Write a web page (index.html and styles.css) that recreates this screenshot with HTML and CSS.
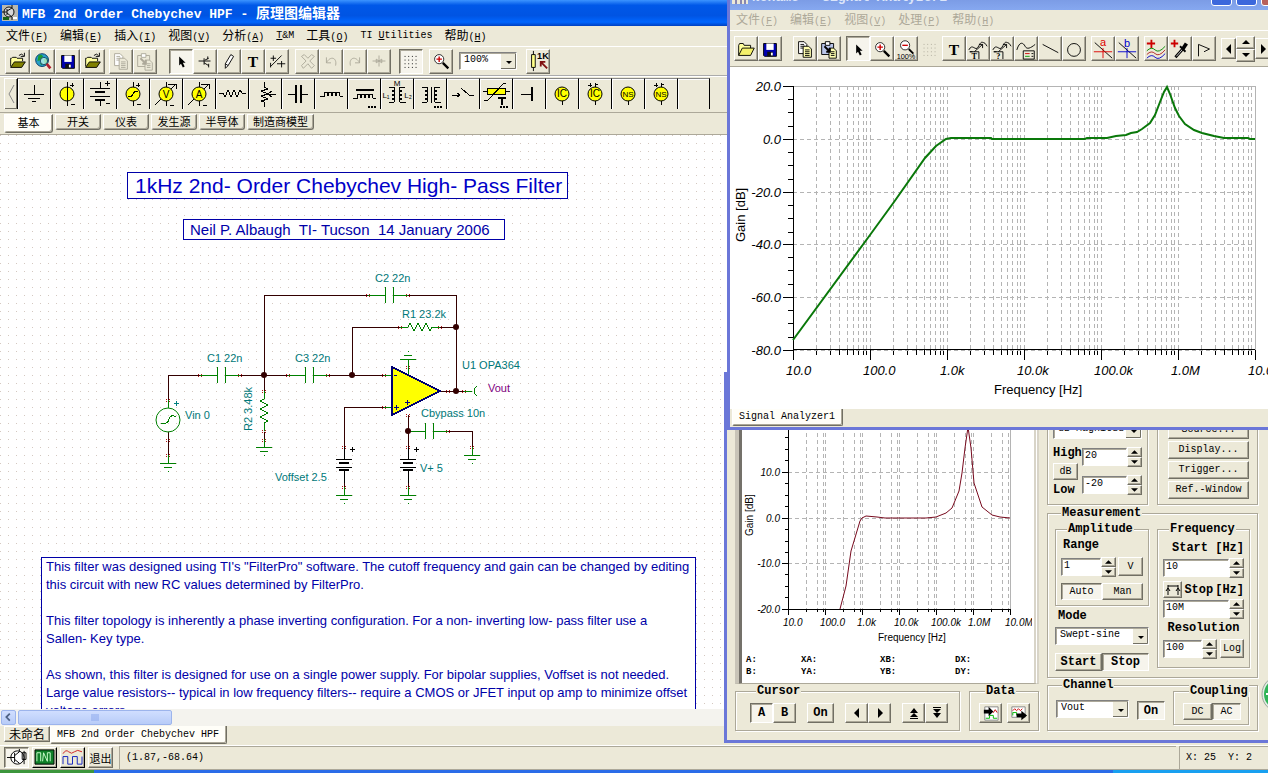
FILE: index.html
```html
<!DOCTYPE html>
<html lang="zh-CN">
<head>
    <meta charset="UTF-8">
    <meta name="viewport" content="width=device-width, initial-scale=1.0">
    <title>MFB 2nd Order Chebychev HPF - 原理图编辑器</title>
    <link rel="stylesheet" href="styles.css">
</head>
<body>
<!-- Shared icons -->
<svg class="sprite" aria-hidden="true">
    <symbol id="i-open" viewBox="0 0 24 24"><path d="M4 18V9h1l1-1h4l1 1h6v3" fill="#ffff9c" stroke="#000"/><path d="M4 19l4-6h12l-4 6z" fill="#808000" stroke="#000"/><path d="M13 6q3-3 5 0m1-3v4h-4" fill="none" stroke="#000"/></symbol>
    <symbol id="i-folder" viewBox="0 0 24 24"><path d="M4 19V8l1-2h4l1 2h7v3" fill="#ffff9c" stroke="#000"/><path d="M4 19l4-8h13l-4 8z" fill="#f4f06a" stroke="#000"/></symbol>
    <symbol id="i-save" viewBox="0 0 24 24"><path d="M5 6h14v14H6l-1-1z" fill="#0000b0" stroke="#000"/><path d="M8 6h8v7H8z" fill="#fff"/><path d="M9 15h6v5H9z" fill="#111"/><path d="M13 16h2v3h-2z" fill="#fff"/></symbol>
    <symbol id="i-copy" viewBox="0 0 24 24"><path d="M5 4h6l3 3v10H5z" fill="#fff" stroke="currentColor"/><path d="M7 7h4M7 9h5M7 11h5" stroke="currentColor"/><path d="M10 9h6l3 3v9h-9z" fill="var(--sheet)" stroke="currentColor"/><path d="M12 13h5M12 15h5M12 17h5M12 19h5" stroke="currentColor"/></symbol>
    <symbol id="i-paste" viewBox="0 0 24 24"><path d="M4 6h13v12H4z" fill="var(--clip)" stroke="currentColor"/><path d="M8 4h5v4H8z" fill="#fff" stroke="currentColor"/><path d="M12 11h5l3 3v8h-8z" fill="var(--sheet)" stroke="currentColor"/><path d="M14 15h4M14 17h4M14 19h4" stroke="currentColor"/><path d="M7 9l6 6m0-4v4H9" fill="none" stroke="currentColor" stroke-width="2"/></symbol>
    <symbol id="i-arrow" viewBox="0 0 24 24"><path d="M10 7v10l2-2 2 4 2-1-2-4h3z" fill="#000"/></symbol>
    <symbol id="i-zoom" viewBox="0 0 24 24"><circle cx="10" cy="10" r="5" fill="#fff" stroke="#222"/><path d="M14 14l6 6" stroke="#000" stroke-width="2.5"/><path d="M7 10h6M10 7v6" stroke="#c00" stroke-width="1.5"/></symbol>
    <symbol id="i-text" viewBox="0 0 24 24"><text x="12" y="18" text-anchor="middle" class="t-icon">T</text></symbol>
    <symbol id="i-grid" viewBox="0 0 24 24"><path d="M5 7h15M5 11h15M5 15h15M5 19h15" stroke="currentColor" stroke-dasharray="1 3"/></symbol>
    <symbol id="i-probe" viewBox="0 0 24 24"><path d="M2 13c4-8 7 2 10-3s3-6 6-5 2 2 4 4M8 15l9-8m0 4V7h-4" fill="none" stroke="#000"/><path d="M3 15h10v8M3 15h3" fill="none" stroke="#000"/></symbol>
    <symbol id="i-left" viewBox="0 0 12 12"><path d="M8 1v10L3 6z"/></symbol>
    <symbol id="i-right" viewBox="0 0 12 12"><path d="M4 1v10l5-5z"/></symbol>
    <symbol id="i-up" viewBox="0 0 8 4"><path d="M0 4h8L4 0z"/></symbol>
    <symbol id="i-down" viewBox="0 0 8 4"><path d="M0 0h8L4 4z"/></symbol>
</svg>

<main class="desktop">
    <!-- Schematic editor -->
    <section class="editor">
        <header class="titlebar">
            <svg width="16" height="16" viewBox="0 0 16 16"><path d="M0 0h16v16H0z" fill="#b9b9b0"/><circle cx="7" cy="7" r="5" fill="#d8d8d8" stroke="#111"/><path d="M5 4v6M5 6l5-3M5 8l5 4v3M0 7h5M10 0v3" fill="none" stroke="#111"/><path d="M1 12h6v3H1z" fill="#186018"/><path d="M11 13h4" stroke="#fff" stroke-width="2"/></svg>
            <h1>MFB 2nd Order Chebychev HPF - <span class="zh">原理图编辑器</span></h1>
        </header>
        <nav class="menubar">
            <a href="#"><span class="zh">文件</span>(<u>F</u>)</a>
            <a href="#"><span class="zh">编辑</span>(<u>E</u>)</a>
            <a href="#"><span class="zh">插入</span>(<u>I</u>)</a>
            <a href="#"><span class="zh">视图</span>(<u>V</u>)</a>
            <a href="#"><span class="zh">分析</span>(<u>A</u>)</a>
            <a href="#"><u>T</u>&amp;M</a>
            <a href="#"><span class="zh">工具</span>(<u>O</u>)</a>
            <a href="#">TI <u>U</u>tilities</a>
            <a href="#"><span class="zh">帮助</span>(<u>H</u>)</a>
        </nav>
        <div class="toolbar">
            <div class="group">
                <button aria-label="Open"><svg><use href="#i-open"/></svg></button>
                <button aria-label="Open from web"><svg viewBox="0 0 24 24"><circle cx="11" cy="11" r="7" fill="#28a0c8" stroke="#036"/><path d="M7 6q4-2 5 1l-2 4-4 1zM13 10l4-1v5l-3 2zM8 14l3 1v2z" fill="#1c9c30"/><circle cx="13" cy="12" r="4" fill="#cfe" fill-opacity=".7" stroke="#146"/><path d="M16 15l4 5" stroke="#b02030" stroke-width="3"/></svg></button>
                <button aria-label="Save"><svg><use href="#i-save"/></svg></button>
                <button aria-label="Close"><svg><use href="#i-open"/></svg></button>
            </div>
            <div class="group dim">
                <button aria-label="Copy"><svg><use href="#i-copy"/></svg></button>
                <button aria-label="Paste"><svg><use href="#i-paste"/></svg></button>
            </div>
            <div class="group">
                <button class="pressed" aria-label="Select"><svg><use href="#i-arrow"/></svg></button>
                <button aria-label="Last component"><svg viewBox="0 0 24 24"><path d="M5 12h7M11 9v7M11 14l5 3M12 11l4-2M15 7v3M16 15v4M12 12h6" fill="none" stroke="#000"/></svg></button>
                <button aria-label="Wire"><svg viewBox="0 0 24 24"><path d="M8 15l6-10 3 2-6 10-3 3zM8 15l3 2" fill="#fff" stroke="#000"/></svg></button>
                <button aria-label="Text"><svg><use href="#i-text"/></svg></button>
                <button aria-label="Hide/Reconnect"><svg viewBox="0 0 24 24"><path d="M5 9h6M8 6v6M5 18L17 6M12 15h9M17 12v7M5 14v5" fill="none" stroke="#000"/></svg></button>
            </div>
            <div class="group dim edit">
                <button aria-label="Delete"><svg viewBox="0 0 24 24"><path d="M6 7l3-2 4 4 4-4 3 2-5 5 5 5-3 3-4-5-5 5-2-3 5-5z" fill="#ece9d8" stroke="currentColor"/></svg></button>
                <button aria-label="Undo"><svg viewBox="0 0 24 24"><path d="M7 8v6h5M7 14c4-8 12-6 10 3" fill="none" stroke="currentColor"/></svg></button>
                <button aria-label="Redo"><svg viewBox="0 0 24 24"><path d="M17 8v6h-5M17 14c-4-8-12-6-10 3" fill="none" stroke="currentColor"/></svg></button>
                <button aria-label="Rotate"><svg viewBox="0 0 24 24"><path d="M5 12h14M12 6v12M9 10l3 2-3 2zM15 10l-3 2 3 2z" fill="none" stroke="currentColor"/></svg></button>
            </div>
            <div class="group"><button class="pressed" aria-label="Grid"><svg><use href="#i-grid"/></svg></button></div>
            <div class="group"><button aria-label="Zoom"><svg><use href="#i-zoom"/></svg></button></div>
            <select class="zoom-select" aria-label="Zoom level"><option>100%</option></select>
            <div class="group"><button aria-label="Find component"><svg viewBox="0 0 24 24"><path d="M7 1v22" stroke="#000"/><path d="M5 5h4v14H5z" fill="#ff8" stroke="#000"/><text x="11" y="10" class="k-icon">1K</text><path d="M22 20l-7-7m0 5v-5h5" fill="none" stroke="#801010" stroke-width="2"/></svg></button></div>
        </div>

        <!-- Component bar -->
        <div class="parts">
            <button class="parts-prev" aria-label="Scroll left"><svg viewBox="0 0 10 24"><path d="M8 3L3 12l5 9" fill="none" stroke="#888"/></svg></button>
            <button aria-label="Ground"><svg viewBox="0 0 32 32"><path d="M16 7v9M6 16h20M10 20h12M14 23h4" stroke="#000"/></svg></button>
            <button aria-label="Voltage source"><svg viewBox="0 0 32 32"><circle cx="16" cy="16" r="7" class="y"/><path d="M16 4v24M19 7h4M21 5v4M20 26h4" class="k"/></svg></button>
            <button aria-label="Battery"><svg viewBox="0 0 32 32"><path d="M16 4v6M6 10h20M6 18h20M16 22v6M21 5h5M23 3v5M22 25h4" class="k"/><path d="M11 14h10M11 22h10" class="k2"/></svg></button>
            <button aria-label="Generator"><svg viewBox="0 0 32 32"><path d="M16 4v24M19 7h4M21 5v4M20 26h4" class="k"/><circle cx="16" cy="16" r="7" class="y"/><path d="M11 18q3 2 5-2t5-2" class="k"/></svg></button>
            <button aria-label="Voltmeter"><svg viewBox="0 0 32 32"><path d="M16 4v24M5 27L26 6m-5 0h5v5M18 6h3M20 27h4" class="k"/><circle cx="16" cy="16" r="7" class="y"/><text x="16" y="20">V</text></svg></button>
            <button aria-label="Ammeter"><svg viewBox="0 0 32 32"><path d="M16 4v24M5 27L26 6m-5 0h5v5M18 6h3M20 27h4" class="k"/><circle cx="16" cy="16" r="7" class="y"/><text x="16" y="20">A</text></svg></button>
            <button aria-label="Resistor"><svg viewBox="0 0 32 32"><path d="M3 15h4l2 4 3-7 3 7 3-7 3 7 3-7 2 3h4" class="k"/></svg></button>
            <button aria-label="Potentiometer"><svg viewBox="0 0 32 32"><path d="M15 4v5l4 2-7 2 7 3-7 2 7 3-7 2 3 1v5M27 16h-8m4-3l-4 3 4 3" class="k"/></svg></button>
            <button aria-label="Capacitor"><svg viewBox="0 0 32 32"><path d="M6 16h7M19 16h7" class="k"/><path d="M14 7v18M19 7v18" class="k2"/></svg></button>
            <button aria-label="Inductor"><svg viewBox="0 0 32 32"><path d="M5 18h4c0-5 4-5 4 0c0-5 4-5 4 0c0-5 4-5 4 0c0-5 4-5 4 0h3" class="k"/></svg></button>
            <button aria-label="Core inductor"><svg viewBox="0 0 32 32"><path d="M8 12h18" class="k2"/><path d="M5 20h4c0-5 4-5 4 0c0-5 4-5 4 0c0-5 4-5 4 0c0-5 4-5 4 0h3" class="k"/><path d="M20 29h8" class="more"/></svg></button>
            <button aria-label="Coupled inductors"><svg viewBox="0 0 32 32"><path d="M8 9h3c4 0 4 4 0 4c4 0 4 4 0 4c4 0 4 4 0 4c4 0 4 4-1 3H8M24 9h-3c-4 0-4 4 0 4c-4 0-4 4 0 4c-4 0-4 4 0 4c-4 0-4 4 1 3h3" class="k"/><text x="16" y="8" class="s">M</text><text x="5" y="20" class="s">L₁</text><text x="27" y="20" class="s">L₂</text></svg></button>
            <button aria-label="Transformer"><svg viewBox="0 0 32 32"><path d="M8 9h3c4 0 4 4 0 4c4 0 4 4 0 4c4 0 4 4 0 4c4 0 4 4-1 3H8M26 9h-3c-4 0-4 4 0 4c-4 0-4 4 0 4c-4 0-4 4 0 4c-4 0-4 4 1 3h3M17 9v16" class="k"/><path d="M20 29h8" class="more"/></svg></button>
            <button aria-label="Switch"><svg viewBox="0 0 32 32"><path d="M5 17h8m-3-2l3 2-3 2M14 10l8 7h5" class="k"/></svg></button>
            <button aria-label="Thermistor"><svg viewBox="0 0 32 32"><path d="M3 13h27" class="k"/><path d="M7 10h18v6H7z" class="y"/><path d="M4 22h4L24 5h2" class="k"/><path d="M18 20h8M22 20v7" class="k2"/><path d="M20 29h8" class="more"/></svg></button>
            <button aria-label="Terminal"><svg viewBox="0 0 32 32"><path d="M8 16h11" class="k"/><path d="M19 9v14" class="k2"/></svg></button>
            <button aria-label="IC"><svg viewBox="0 0 32 32"><path d="M16 22v5" class="k"/><circle cx="16" cy="16" r="7" class="y"/><text x="16" y="19">IC</text></svg></button>
            <button aria-label="IC plus"><svg viewBox="0 0 32 32"><path d="M16 5v22M9 7h4M11 5v4M16 6h3" class="k"/><circle cx="16" cy="16" r="7" class="y"/><text x="16" y="19">IC</text></svg></button>
            <button aria-label="NS"><svg viewBox="0 0 32 32"><path d="M16 22v5" class="k"/><circle cx="16" cy="16" r="7" class="y"/><text x="16" y="19" class="s">NS</text></svg></button>
            <button aria-label="NS plus"><svg viewBox="0 0 32 32"><path d="M16 5v22M9 7h4M11 5v4M16 6h3" class="k"/><circle cx="16" cy="16" r="7" class="y"/><text x="16" y="19" class="s">NS</text></svg></button>
            <span class="blank"></span>
        </div>
        <div class="part-tabs">
            <button class="active">基本</button>
            <button>开关</button>
            <button>仪表</button>
            <button>发生源</button>
            <button>半导体</button>
            <button>制造商模型</button>
        </div>

        <!-- Drawing area -->
        <div class="canvas">
            <svg class="schematic" width="100%" height="100%">
                <defs>
                    <pattern id="dots" width="8" height="8" patternUnits="userSpaceOnUse"><rect width="1" height="1" fill="#d4c8c0"/></pattern>
                    <g id="gnd"><path d="M0-8V0M-8 0H8M-4 4H4" class="c"/><path d="M0 8h1" class="c"/></g>
                    <g id="pin"><path d="M-2-1h1v1h-1zM1-1h1v1H1zM-2 1h1v1h-1zM1 1h1v1H1z" fill="#b01818"/></g>
                    <g id="bat"><path d="M0-16V-4M-8-4H8M-8 4H8M0 8V20" class="b"/><path d="M-5 0H5M-5 7H5" stroke="#000" stroke-width="2"/><path d="M6-14h5M8-16v5" class="b"/></g>
                </defs>
                <rect width="100%" height="100%" fill="url(#dots)"/>
                <g transform="translate(0 -135)">
                    <path class="w" d="M168 408V375H200M240 375H288M264 375V295H368M408 295H456V391M352 375V327H400M440 327H456M328 375H384M264 375V391M264 432V440M168 432V456M440 391H464M384 407H344V447M408 415V447M448 431H472V447M344 480V487M408 480V487"/>
                    <!-- capacitors -->
                    <path class="c" d="M200 375h17M225 375h15M217 367v16M225 367v16"/>
                    <path class="c" d="M368 295h17M393 295h15M385 287v16M393 287v16"/>
                    <path class="c" d="M288 375h17M313 375h15M305 367v16M313 367v16"/>
                    <path class="c" d="M408 431h17M433 431h15M425 423v16M433 423v16"/>
                    <path class="c" d="M400 327h8l2-4 4 8 4-8 4 8 4-8 4 8 2-4h8M264 391v8l-4 2 8 4-8 4 8 4-8 4 8 4-4 2v8M384 375h8M384 407h8M408 374v-15M464 391h8M477 386q-6 5 0 10M400 359h16M404 355h8M408 351h1"/>
                    <circle cx="168" cy="420" r="12" class="c"/><path class="c" d="M161 423h5q2 0 3-4t5-3h2M168 400v8"/>
                    <use href="#gnd" x="168" y="463"/><use href="#gnd" x="264" y="447"/><use href="#gnd" x="344" y="495"/><use href="#gnd" x="408" y="495"/><use href="#gnd" x="472" y="455"/>
                    <use href="#bat" x="344" y="463"/><use href="#bat" x="408" y="463"/>
                    <path d="M392 367v48l48-24z" fill="#ff0" stroke="#000070" stroke-width="2"/>
                    <path d="M394 375h3M394 407h5M396 405v5M405 402h5M407 400v5" stroke="#000080"/>
                    <path d="M174 403h5M176 401v5" stroke="#008080"/>
                    <use href="#pin" x="200" y="375"/><use href="#pin" x="240" y="375"/><use href="#pin" x="288" y="375"/><use href="#pin" x="328" y="375"/><use href="#pin" x="368" y="295"/><use href="#pin" x="408" y="295"/><use href="#pin" x="400" y="327"/><use href="#pin" x="440" y="327"/><use href="#pin" x="264" y="391"/><use href="#pin" x="264" y="431"/><use href="#pin" x="264" y="440"/><use href="#pin" x="168" y="400"/><use href="#pin" x="168" y="440"/><use href="#pin" x="168" y="455"/><use href="#pin" x="384" y="375"/><use href="#pin" x="384" y="407"/><use href="#pin" x="408" y="367"/><use href="#pin" x="408" y="415"/><use href="#pin" x="448" y="391"/><use href="#pin" x="464" y="391"/><use href="#pin" x="344" y="447"/><use href="#pin" x="408" y="447"/><use href="#pin" x="344" y="487"/><use href="#pin" x="408" y="487"/><use href="#pin" x="448" y="431"/><use href="#pin" x="472" y="447"/>
                    <g fill="#300"><circle cx="264" cy="375" r="3"/><circle cx="352" cy="375" r="3"/><circle cx="456" cy="327" r="3"/><circle cx="456" cy="391" r="3"/><circle cx="408" cy="431" r="3"/></g>
                    <g class="names">
                        <text x="207" y="362">C1 22n</text>
                        <text x="375" y="282">C2 22n</text>
                        <text x="295" y="362">C3 22n</text>
                        <text x="402" y="318">R1 23.2k</text>
                        <text x="252" y="431" transform="rotate(-90 252 431)">R2 3.48k</text>
                        <text x="185" y="419">Vin 0</text>
                        <text x="462" y="369">U1 OPA364</text>
                        <text x="421" y="417">Cbypass 10n</text>
                        <text x="275" y="481">Voffset 2.5</text>
                        <text x="420" y="472">V+ 5</text>
                        <text x="488" y="392" class="out">Vout</text>
                    </g>
                </g>
            </svg>
            <h2 class="note heading">1kHz 2nd- Order Chebychev High- Pass Filter</h2>
            <p class="note author">Neil P. Albaugh&nbsp; TI- Tucson&nbsp; 14 January 2006</p>
            <div class="note remarks">
                <p>This filter was designed using TI's "FilterPro" software. The cutoff frequency and gain can be changed by editing<br>this circuit with new RC values determined by FilterPro.</p>
                <p>This filter topology is inherently a phase inverting configuration. For a non- inverting low- pass filter use a<br>Sallen- Key type.</p>
                <p>As shown, this filter is designed for use on a single power supply. For bipolar supplies, Voffset is not needed.<br>Large value resistors-- typical in low frequency filters-- require a CMOS or JFET input op amp to minimize offset<br>voltage errors.</p>
            </div>
        </div>
        <div class="hscroll">
            <button class="hscroll-left" aria-label="Scroll left"><svg viewBox="0 0 15 15"><path d="M9 3L5 7l4 4" fill="none" stroke="#4d6185" stroke-width="2"/></svg></button>
            <button class="hscroll-thumb" aria-label="Scroll position"><svg viewBox="0 0 8 8"><path d="M1 0v7M3 0v7M5 0v7M7 0v7" stroke="#8ca8ec"/></svg></button>
        </div>
        <div class="doc-tabs">
            <button><span class="zh">未命名</span></button>
            <button class="active">MFB 2nd Order Chebychev HPF</button>
        </div>
        <footer class="status">
            <button class="pressed" aria-label="Schematic"><svg viewBox="0 0 24 20"><circle cx="13" cy="10" r="7" fill="#fff" stroke="#000"/><path d="M2 10h8M10 5v10M10 8l5-4M10 12l5 4M15 4V1M20 3v14M18 5h4v7h-4z" fill="none" stroke="#000"/></svg></button>
            <button class="dark" aria-label="Oscilloscope"><svg viewBox="0 0 24 20"><path d="M2 2h20v15H2z" fill="#108028" stroke="#000"/><path d="M4 14V5h4v9M10 14l1-9 4 9V5h3v9" fill="none" stroke="#d0ffd0"/></svg></button>
            <button class="dark" aria-label="Diagram"><svg viewBox="0 0 24 20"><path d="M2 6q3-5 6-2t6 0 8 0" fill="none" stroke="#d02020"/><path d="M2 17V9h5v8h5V9h5v8h5V9" fill="none" stroke="#1020c0"/></svg></button>
            <button class="exit">退出</button>
            <span class="cell coords">(1.87,-68.64)</span>
            <span class="cell cursor-pos">X: 25&nbsp; Y: 2</span>
        </footer>
        <div class="taskbar"><span class="start"></span><span class="tray"></span></div>
    </section>

    <!-- Analyzer instrument -->
    <section class="window instrument">
        <div class="col-left">
            <div class="screen">
                <svg id="small-chart" class="chart small" width="290" height="247">
                    <path class="trace" d="M98 202L104 179L109 144L118 114L120 111L124 109L135 110L143 111H184L194 110L204 106L210 101L217 84L220 66L223 41L226 20L229 41L232 76L240 100L250 108L258 110L268 111"/>
                </svg>
                <div class="readout">
                    <span>A:</span><span>XA:</span><span>XB:</span><span>DX:</span>
                    <span>B:</span><span>YA:</span><span>YB:</span><span>DY:</span>
                </div>
            </div>
            <div class="row controls">
                <fieldset class="cursor">
                    <legend>Cursor</legend>
                    <div><button class="pressed">A</button><button>B</button></div>
                    <div><button class="on">On</button></div>
                    <div>
                        <button aria-label="Left"><svg class="tri"><use href="#i-left"/></svg></button>
                        <button aria-label="Right"><svg class="tri"><use href="#i-right"/></svg></button>
                    </div>
                    <div>
                        <button aria-label="Peak"><svg class="tri" viewBox="0 0 12 12"><path d="M2 6l4-5 4 5zM2 10l4-4 4 4zM2 11h8v1H2z"/></svg></button>
                        <button aria-label="Valley"><svg class="tri" viewBox="0 0 12 12"><path d="M2 6l4 5 4-5zM2 2l4 4 4-4zM2 0h8v1H2z"/></svg></button>
                    </div>
                </fieldset>
                <fieldset class="data">
                    <legend>Data</legend>
                    <button aria-label="Import"><svg viewBox="0 0 22 20"><path d="M5 3h14v14H5z" fill="#fff" stroke="#888"/><path d="M12 7l2 2 2-3 2 3" fill="none" stroke="#c00"/><path d="M6 15h4v-3h4v3h4" fill="none" stroke="#0b0"/><path d="M4 6h5V3l5 5-5 5v-3H4z"/></svg></button>
                    <button aria-label="Export"><svg viewBox="0 0 22 20"><path d="M4 3h14v11H4z" fill="#fff" stroke="#888"/><path d="M5 7l2-2 2 2 2-2 2 2 2-2" fill="none" stroke="#c00"/><path d="M5 12v-3h4v3" fill="none" stroke="#0b0"/><path d="M9 10h5V7l6 5-6 5v-3H9z"/></svg></button>
                </fieldset>
            </div>
        </div>
        <div class="col-right">
            <div class="pair-row">
                <fieldset class="vertical">
                    <select aria-label="Vertical unit"><option>dB Magnitud</option></select>
                    <div class="range-grid">
                        <div class="range-names">
                            <label for="high">High</label>
                            <button>dB</button>
                            <label for="low">Low</label>
                        </div>
                        <div class="range-values">
                            <div class="spin"><input id="high" type="text" value="20"><span><button aria-label="Up"><svg><use href="#i-up"/></svg></button><button aria-label="Down"><svg><use href="#i-down"/></svg></button></span></div>
                            <div class="spin"><input id="low" type="text" value="-20"><span><button aria-label="Up"><svg><use href="#i-up"/></svg></button><button aria-label="Down"><svg><use href="#i-down"/></svg></button></span></div>
                        </div>
                    </div>
                </fieldset>
                <fieldset class="setup">
                    <button>Source...</button>
                    <button>Display...</button>
                    <button>Trigger...</button>
                    <button>Ref.-Window</button>
                </fieldset>
            </div>
            <fieldset class="measurement">
                <legend>Measurement</legend>
                <div class="measure-left">
                    <fieldset class="amplitude">
                        <legend>Amplitude</legend>
                        <label for="range">Range</label>
                        <div class="row">
                            <div class="spin"><input id="range" type="text" value="1"><span><button aria-label="Up"><svg><use href="#i-up"/></svg></button><button aria-label="Down"><svg><use href="#i-down"/></svg></button></span></div>
                            <button class="unit">V</button>
                        </div>
                        <div class="pair"><button class="pressed">Auto</button><button>Man</button></div>
                    </fieldset>
                    <label for="mode">Mode</label>
                    <select id="mode"><option>Swept-sine</option></select>
                    <div class="pair strong"><button>Start</button><button class="pressed">Stop</button></div>
                </div>
                <fieldset class="frequency">
                    <legend>Frequency</legend>
                    <label for="fstart">Start [Hz]</label>
                    <div class="spin"><input id="fstart" type="text" value="10"><span><button aria-label="Up"><svg><use href="#i-up"/></svg></button><button aria-label="Down"><svg><use href="#i-down"/></svg></button></span></div>
                    <div class="stop-row">
                        <button aria-label="Span"><svg viewBox="0 0 16 14"><path d="M3 2v10M13 2v10M3 3h10M1 8l2-3 2 3M11 8l2-3 2 3" fill="none" stroke="#000"/></svg></button>
                        <label for="fstop">Stop<span>[Hz]</span></label>
                    </div>
                    <div class="spin"><input id="fstop" type="text" value="10M"><span><button aria-label="Up"><svg><use href="#i-up"/></svg></button><button aria-label="Down"><svg><use href="#i-down"/></svg></button></span></div>
                    <label for="resolution" class="res">Resolution</label>
                    <div class="row">
                        <div class="spin"><input id="resolution" type="text" value="100"><span><button aria-label="Up"><svg><use href="#i-up"/></svg></button><button aria-label="Down"><svg><use href="#i-down"/></svg></button></span></div>
                        <button class="log">Log</button>
                    </div>
                </fieldset>
            </fieldset>
            <fieldset class="channel">
                <legend>Channel</legend>
                <select aria-label="Channel"><option>Vout</option></select>
                <button class="pressed on">On</button>
                <fieldset class="coupling">
                    <legend>Coupling</legend>
                    <div class="pair"><button>DC</button><button class="pressed">AC</button></div>
                </fieldset>
            </fieldset>
        </div>
    </section>

    <!-- Signal analyzer diagram -->
    <section class="window signal">
        <header class="titlebar faded">
            <svg width="16" height="16" viewBox="0 0 16 16"><path d="M0 0h16v16H0z" fill="#ece9d8"/><path d="M4 2v14M9 2v14M13 2v14" stroke="#228"/><path d="M1 11h14" stroke="#c22"/></svg>
            <h1>Noname - Signal Analyzer1</h1>
            <button class="win-btn" aria-label="Minimize"></button>
            <button class="win-btn max" aria-label="Maximize"></button>
            <button class="win-btn close" aria-label="Close"></button>
        </header>
        <nav class="menubar">
            <a href="#"><span class="zh">文件</span>(<u>F</u>)</a>
            <a href="#"><span class="zh">编辑</span>(<u>E</u>)</a>
            <a href="#"><span class="zh">视图</span>(<u>V</u>)</a>
            <a href="#"><span class="zh">处理</span>(<u>P</u>)</a>
            <a href="#"><span class="zh">帮助</span>(<u>H</u>)</a>
        </nav>
        <div class="toolbar">
            <div class="group">
                <button aria-label="Open"><svg><use href="#i-folder"/></svg></button>
                <button aria-label="Save"><svg><use href="#i-save"/></svg></button>
            </div>
            <div class="group">
                <button aria-label="Copy"><svg><use href="#i-copy"/></svg></button>
                <button aria-label="Paste"><svg><use href="#i-paste"/></svg></button>
            </div>
            <div class="group">
                <button class="pressed" aria-label="Select"><svg><use href="#i-arrow"/></svg></button>
                <button aria-label="Zoom"><svg><use href="#i-zoom"/></svg></button>
                <button aria-label="Zoom 100%"><svg viewBox="0 0 24 24"><circle cx="11" cy="8" r="5" fill="#fff" stroke="#222"/><path d="M15 12l5 5" stroke="#000" stroke-width="2"/><path d="M8 8h6" stroke="#c00" stroke-width="1.5"/><text x="12" y="23" class="pct">100%</text></svg></button>
                <button class="dim" aria-label="Grid"><svg><use href="#i-grid"/></svg></button>
                <button aria-label="Text"><svg><use href="#i-text"/></svg></button>
                <button aria-label="Label"><svg viewBox="0 0 24 24"><use href="#i-probe"/><text x="8" y="23" class="lbl">T</text></svg></button>
                <button aria-label="Query"><svg viewBox="0 0 24 24"><use href="#i-probe"/><text x="8" y="23" class="lbl">?</text></svg></button>
                <button aria-label="Legend"><svg viewBox="0 0 24 24"><path d="M2 13c3-10 7-8 9-4s6 2 11-2M9 14h12v9H9z" fill="none" stroke="#000"/><path d="M11 17h5" stroke="#c00"/><path d="M11 20h5" stroke="#090"/><path d="M18 17h2M18 20h2" stroke="#000"/></svg></button>
                <button aria-label="Line"><svg viewBox="0 0 24 24"><path d="M4 7l17 9" stroke="#000"/></svg></button>
                <button aria-label="Circle"><svg viewBox="0 0 24 24"><circle cx="12" cy="13" r="7" fill="none" stroke="#000"/></svg></button>
            </div>
            <div class="group">
                <button aria-label="Cursor a"><svg viewBox="0 0 24 24"><path d="M3 5l19 17" stroke="#000"/><path d="M2 15h20M12 11v11" stroke="#d00"/><text x="12" y="9" class="cur a">a</text></svg></button>
                <button aria-label="Cursor b"><svg viewBox="0 0 24 24"><path d="M3 5l19 17" stroke="#000"/><path d="M2 15h20M12 11v11" stroke="#00c"/><text x="12" y="10" class="cur blue">b</text></svg></button>
            </div>
            <div class="group">
                <button aria-label="Add curves"><svg viewBox="0 0 24 24"><path d="M2 6h9M7 2v9" stroke="#c00" stroke-width="2"/><path d="M2 14q5-5 9-1t11-4" fill="none" stroke="#080"/><path d="M2 18q5-5 9-1t11-4" fill="none" stroke="#b02020"/><path d="M2 22q5-5 9-1t11-4" fill="none" stroke="#00c"/></svg></button>
                <button aria-label="Probe"><svg viewBox="0 0 24 24"><path d="M2 6h8M6 2v8" stroke="#c00" stroke-width="2"/><path d="M7 21l8-9" stroke="#000" stroke-width="3"/><path d="M8 20l7-8" stroke="#ddd"/><path d="M12 9l6 6" stroke="#000" stroke-width="2"/><path d="M15 12l4-6" stroke="#000" stroke-width="4"/></svg></button>
                <button aria-label="Play"><svg viewBox="0 0 24 24"><path d="M6 20V7l12 5-6 3" fill="none" stroke="#000"/></svg></button>
            </div>
            <div class="group nav">
                <button aria-label="Left"><svg class="tri"><use href="#i-left"/></svg></button>
                <span class="stack"><button aria-label="Up"><svg><use href="#i-up"/></svg></button><button aria-label="Down"><svg><use href="#i-down"/></svg></button></span>
                <button aria-label="Right"><svg class="tri"><use href="#i-right"/></svg></button>
            </div>
        </div>
        <svg id="big-chart" class="chart" width="100%" height="342">
            <path class="trace" d="M63 273L140 168L164 135L195 91L206 79L216 72L221 71H261L262 72H355L357 71H377L386 69L396 68L401 66L407 65L412 62L420 56L425 48L430 35L434 25L437 20L440 27L445 41L449 49L455 57L464 63L472 66L484 69L494 71H518L520 72H525"/>
        </svg>
        <div class="doc-tabs"><button class="active">Signal Analyzer1</button></div>
    </section>
    <button class="ball" aria-label="Accelerate"><svg width="38" height="38" viewBox="0 0 38 38"><circle cx="19" cy="19" r="18" fill="#e4ebe4" stroke="#9aa89a"/><circle cx="19" cy="19" r="16" fill="#2fb457"/><path d="M5 19h6" stroke="#fff" stroke-width="2"/></svg></button>
</main>

<script>
    const NS = 'http://www.w3.org/2000/svg';

    function add(svg, name, attrs, text) {
        const el = document.createElementNS(NS, name);
        for (const key in attrs) el.setAttribute(key, attrs[key]);
        if (text) el.textContent = text;
        svg.insertBefore(el, svg.querySelector('.trace'));
    }

    // Draws log/linear axes behind the trace
    function drawAxes(svg, c) {
        const right = c.x + c.decade * 6;
        const bottom = c.y + c.step * (c.yLabels.length - 1);
        const line = (cls, d) => add(svg, 'path', { class: cls, d: d });

        for (let n = 0; n < 6; n++) {
            c.minors.forEach((m) => {
                const x = Math.round(c.x + c.decade * (n + Math.log10(m)));
                line('grid', `M${x} ${c.y}V${bottom}`);
                line('axis', `M${x} ${bottom}v${c.tick}`);
            });
        }
        line('edge', `M${c.x} ${c.y}H${right}V${bottom}`);

        c.yLabels.forEach((label, i) => {
            const y = Math.round(c.y + c.step * i);
            line('grid', `M${c.x} ${y}H${right}`);
            line('axis', `M${c.x} ${y}h${-c.tick * 2}`);
            if (label) {
                add(svg, 'text', { class: 'it', x: c.x - c.tick * 2 - 2, y: y + c.drop, 'text-anchor': 'end' }, label);
            }
            for (let k = 1; k < 4 && y < bottom - 2; k++) {
                line('axis', `M${c.x} ${Math.round(y + c.step * k / 4)}h${-c.tick}`);
            }
        });
        ['10.0', '100.0', '1.0k', '10.0k', '100.0k', '1.0M', '10.0M'].forEach((label, n) => {
            const x = c.x + c.decade * n;
            line('axis', `M${x} ${bottom}v${c.tick * 2}`);
            add(svg, 'text', { class: 'it', x: x - c.shift, y: bottom + c.xDrop }, label);
        });
        line('axis', `M${c.x} ${c.y}V${bottom}H${right}`);
        add(svg, 'text', { x: c.titleX, y: c.titleY }, 'Frequency [Hz]');
        add(svg, 'text', { x: c.gainX, y: c.gainY, transform: `rotate(-90 ${c.gainX} ${c.gainY})` }, 'Gain [dB]');
    }

    drawAxes(document.getElementById('big-chart'), {
        x: 63, y: 19, decade: 77, step: 52.75, tick: 5, drop: 5, xDrop: 25, shift: 7,
        minors: [2, 3, 4, 5, 6, 7, 8, 9, 10],
        yLabels: ['20.0', '0.0', '-20.0', '-40.0', '-60.0', '-80.0'],
        titleX: 264, titleY: 327, gainX: 15, gainY: 175
    });
    drawAxes(document.getElementById('small-chart'), {
        x: 46, y: 19, decade: 37, step: 45.75, tick: 3, drop: 4, xDrop: 17, shift: 5,
        minors: [3, 6, 9, 10],
        yLabels: ['', '10.0', '0.0', '-10.0', '-20.0'],
        titleX: 136, titleY: 234, gainX: 11, gainY: 129
    });
</script>
</body>
</html>
```
FILE: styles.css
```css
* {
    box-sizing: border-box;
}

body {
    margin: 0;
    font-family: "Liberation Mono", "Noto Sans CJK SC", monospace;
    font-size: 10px;
    line-height: 12px;
    color: #000;
}

h1, h2, p, fieldset {
    margin: 0;
}

.sprite {
    position: absolute;
    width: 0;
    height: 0;
}

.zh {
    font-family: "Noto Sans CJK SC", sans-serif;
    font-size: 12px;
}

.t-icon {
    font: bold 17px "Liberation Serif", serif;
}

.desktop {
    position: relative;
    height: 100vh;
    overflow: hidden;
    background: #ece9d8;
}

/* Buttons, inputs, selects */
button {
    display: flex;
    align-items: center;
    justify-content: center;
    flex: none;
    padding: 0;
    font: inherit;
    color: inherit;
    background: #ece9d8;
    border: 1px solid;
    border-color: #fff #716f64 #716f64 #fff;
    box-shadow: inset -1px -1px 0 #aca899;
    white-space: nowrap;
}

button.pressed {
    background: #f6f4ec;
    border-color: #716f64 #fff #fff #716f64;
    box-shadow: inset 1px 1px 0 #aca899;
}

input, select {
    min-width: 0;
    height: 18px;
    padding: 0 0 2px 2px;
    font: inherit;
    color: #000;
    background: #fff;
    border: 1px solid;
    border-color: #808080 #fff #fff #808080;
    box-shadow: inset 1px 1px 0 #aca899;
    border-radius: 0;
}

select {
    appearance: none;
    padding-left: 4px;
    background: #fff url("data:image/svg+xml,%3Csvg xmlns='http://www.w3.org/2000/svg' width='15' height='15'%3E%3Cpath d='M0 0h15v15H0z' fill='%23ece9d8'/%3E%3Cpath d='M0 14.5h14.5V0' fill='none' stroke='%23716f64'/%3E%3Cpath d='M5 7h6l-3 3z'/%3E%3C/svg%3E") no-repeat right center;
}

/* Title and menus */
.titlebar {
    display: flex;
    flex: none;
    align-items: center;
    gap: 4px;
    height: 26px;
    padding-left: 2px;
    background: linear-gradient(#3c94ff, #0058e8 20%, #0054e3 60%, #0066ff 85%, #0040c0);
}

.titlebar h1 {
    flex: 1;
    font-size: 13px;
    line-height: 16px;
    color: #fff;
    white-space: nowrap;
}

.titlebar .zh {
    font-size: 14px;
}

.menubar {
    display: flex;
    align-items: center;
    gap: 12px;
    height: 20px;
    padding-left: 6px;
}

.menubar a {
    color: inherit;
    text-decoration: none;
    white-space: nowrap;
}

/* Toolbars */
.toolbar {
    display: flex;
    align-items: center;
    height: 31px;
    padding-left: 5px;
    border-top: 1px solid #fff;
    border-bottom: 2px groove #fff;
}

.group {
    --sheet: #ffffb0;
    --clip: #b8c4e8;
    display: flex;
    margin-right: 6px;
}

.group button {
    width: 24px;
    height: 25px;
}

.group svg {
    width: 22px;
    height: 22px;
}

.dim {
    --sheet: #ece9d8;
    --clip: #ece9d8;
    color: #aca899;
}

.editor .group:first-child button {
    width: 25px;
}

.editor .group:first-child {
    margin-right: 4px;
}

.editor .dim {
    margin-right: 12px;
}

.editor .edit {
    margin-right: 8px;
}

.editor .toolbar .zoom-select {
    width: 58px;
    margin-right: 9px;
}

.k-icon {
    font: bold 10px "Liberation Sans", sans-serif;
}

/* Component bar */
.parts {
    display: flex;
    height: 36px;
    padding: 1px 0 3px 4px;
    border-bottom: 1px solid #aca899;
}

.parts button, .blank {
    width: 33px;
    border: 0;
    border-left: 1px solid #000;
    border-top: 1px solid #888;
    box-shadow: inset 1px 1px 0 #fff;
}

.blank {
    border-right: 1px solid #000;
}

.parts .parts-prev {
    width: 13px;
    border-color: #fff;
    box-shadow: inset -1px -1px 0 #716f64;
}

.parts svg {
    width: 32px;
    height: 32px;
    shape-rendering: crispEdges;
}

.parts circle, .parts .parts-prev path {
    shape-rendering: auto;
}

.parts .parts-prev svg {
    width: 10px;
    height: 24px;
}

.parts text {
    font: 10px "Liberation Sans", sans-serif;
    text-anchor: middle;
}

.parts text.s {
    font-size: 8px;
}

.y {
    fill: #ff0;
    stroke: #000;
}

.k, .k2, .more {
    fill: none;
    stroke: #000;
}

.k2, .more {
    stroke-width: 2;
}

.more {
    stroke-dasharray: 2 1;
}

.part-tabs {
    display: flex;
    gap: 2px;
    height: 22px;
    padding: 1px 0 4px 4px;
    border-bottom: 1px solid #aca899;
}

.part-tabs button {
    min-width: 46px;
    padding: 0 5px 2px;
    font-family: "Noto Sans CJK SC", sans-serif;
    font-size: 11px;
    border-radius: 0 0 3px 3px;
}

.part-tabs .active {
    width: 49px;
    height: 19px;
    padding-bottom: 4px;
    background: #fffef8;
}

/* Drawing area */
.canvas {
    position: relative;
    min-height: 0;
    overflow: hidden;
    background: #fff;
}

.schematic {
    position: absolute;
    inset: 0;
    shape-rendering: crispEdges;
}

.schematic circle, .schematic text {
    shape-rendering: auto;
}

.w, .c, .b {
    fill: none;
    stroke: #300;
}

.c {
    stroke: #008000;
}

.b {
    stroke: #000;
}

.names {
    font: 11px "Liberation Sans", sans-serif;
    fill: #007878;
}

.names .out {
    fill: #800080;
}

.note {
    position: absolute;
    font-family: "Liberation Sans", sans-serif;
    font-weight: normal;
    color: #0000a8;
    background: #fff;
    border: 1px solid #0000a8;
    white-space: nowrap;
}

.heading {
    left: 127px;
    top: 37px;
    padding: 0 5px 0 7px;
    font-size: 21px;
    line-height: 25px;
    color: #0000c8;
}

.author {
    left: 183px;
    top: 84px;
    padding: 0 14px 0 6px;
    font-size: 15px;
    line-height: 19px;
}

.remarks {
    left: 41px;
    top: 422px;
    width: 655px;
    height: 200px;
    padding-left: 4px;
    font-size: 13px;
    line-height: 18px;
}

.remarks p {
    margin-bottom: 18px;
}

.hscroll {
    display: flex;
    align-items: center;
    gap: 2px;
    height: 17px;
    padding-left: 1px;
    background: #f4f3ee;
}

.hscroll button {
    height: 15px;
    background: linear-gradient(#d0deff, #b8ccf8);
    border: 1px solid #9cb4ec;
    border-radius: 2px;
    box-shadow: none;
}

.hscroll-left {
    width: 15px;
}

.hscroll-thumb {
    width: 154px;
}

.hscroll-thumb svg {
    width: 8px;
    height: 8px;
}

.doc-tabs {
    display: flex;
    height: 19px;
    padding-left: 4px;
}

.doc-tabs button {
    height: 16px;
    padding: 0 4px;
}

.doc-tabs .active {
    height: 18px;
    padding: 0 7px 0 6px;
    background: #fffef8;
    border-top: 0;
    border-radius: 0 0 2px 2px;
}

.status {
    display: flex;
    align-items: center;
    gap: 3px;
    height: 25px;
    padding-left: 4px;
    border-top: 1px solid #fff;
    border-bottom: 1px solid #aca899;
}

.status button {
    width: 25px;
    height: 21px;
}

.status .dark {
    border-color: #fff #000 #000 #fff;
}

.status .exit {
    font-family: "Noto Sans CJK SC", sans-serif;
    font-size: 11px;
}

.status svg {
    width: 23px;
    height: 19px;
}

.cell {
    align-self: stretch;
    padding: 5px 6px;
    border-left: 1px solid #aca899;
    border-top: 1px solid #aca899;
}

.coords {
    flex: 1;
    margin-left: 3px;
}

.cursor-pos {
    width: 89px;
}

.taskbar {
    display: flex;
    height: 3px;
    background: #2a6ce8;
}

.start {
    width: 94px;
    background: #3c963c;
}

.tray {
    width: 155px;
    margin-left: auto;
    background: #18a0f0;
}

.editor {
    display: flex;
    flex-direction: column;
    height: 100%;
}

.editor > * {
    flex: none;
}

.editor > .canvas {
    flex: 1;
}

/* Floating windows */
.window {
    position: absolute;
    right: 0;
    background: #ece9d8;
    border: solid #6b77d8;
    border-width: 3px 0 3px 3px;
    overflow: hidden;
}

.signal {
    left: 727px;
    top: -22px;
}

.faded {
    height: 29px;
    padding-left: 2px;
    background: linear-gradient(#9cb8f0, #7a9ae4 60%, #86a8f0);
}

.faded h1 {
    padding-top: 4px;
    color: #dce6fa;
}

.win-btn {
    width: 21px;
    height: 21px;
    background: #3c68dc;
    border: 1px solid #fff;
    border-radius: 3px;
    box-shadow: none;
}

.win-btn.close {
    margin-right: -14px;
    background: #b8605c;
}

.signal .menubar {
    color: #aca899;
}

.signal .toolbar {
    height: 37px;
    padding-left: 4px;
    border-bottom: 1px solid #aca899;
}

.signal .group {
    margin-right: 5px;
    color: #000;
}

.signal .group:first-child {
    margin-right: 11px;
}

.signal .dim {
    color: #aca899;
    border-color: transparent;
    box-shadow: none;
}

.signal .nav {
    align-items: center;
    margin-right: 0;
}

.signal .nav button {
    width: 15px;
    height: 21px;
}

.signal .nav .stack button {
    width: 19px;
    height: 13px;
}

.signal .tri, .tri {
    width: 12px;
    height: 12px;
}

.signal .stack svg {
    width: 8px;
    height: 4px;
}

.pct {
    font: 8px "Liberation Sans", sans-serif;
    text-anchor: middle;
}

.lbl {
    font: bold 9px "Liberation Serif", serif;
    text-anchor: middle;
}

.cur {
    font: 12px "Liberation Sans", sans-serif;
    text-anchor: middle;
    fill: #d00;
}

.cur.blue {
    fill: #00c;
}

.signal .doc-tabs {
    height: 18px;
    padding-left: 2px;
}

.signal .doc-tabs .active {
    height: 17px;
}

/* Charts */
.chart {
    display: block;
    background: #fff;
    font: 13px "Liberation Sans", sans-serif;
}

.chart.small {
    font-size: 10px;
}

.chart path {
    fill: none;
    shape-rendering: crispEdges;
}

.it {
    font-style: italic;
}

.grid {
    stroke: #b4b4b4;
    stroke-dasharray: 4 3;
}

.edge {
    stroke: #b4b4b4;
}

.axis {
    stroke: #000;
}

.chart .trace {
    stroke: #0a780a;
    stroke-width: 2;
    shape-rendering: auto;
}

.small .trace {
    stroke: #780a1e;
    stroke-width: 1;
}

/* Instrument panel */
.instrument {
    display: flex;
    align-items: flex-end;
    gap: 8px;
    left: 724px;
    top: 372px;
    bottom: 30px;
    padding: 0 10px 9px 8px;
}

.row {
    display: flex;
}

.col-left {
    flex: 1;
}

.col-right {
    display: flex;
    flex-direction: column;
    gap: 1px;
    width: 211px;
}

.screen {
    padding-bottom: 5px;
    background: #fff;
    border: 1px solid #aca899;
    border-left: 7px ridge #c8c4b8;
    border-right: 5px double #d8d4c8;
}

.readout {
    display: grid;
    grid-template-columns: 55px 79px 75px 1fr;
    padding: 0 0 0 4px;
    font-weight: bold;
    font-size: 9px;
}

.controls {
    gap: 9px;
    margin-top: 1px;
}

fieldset {
    min-width: 0;
    padding: 0;
    border: 1px solid #aca899;
    box-shadow: inset 1px 1px 0 #fff, 1px 1px 0 #fff;
}

legend, label {
    font-size: 12px;
    font-weight: bold;
    line-height: 12px;
}

legend {
    margin-left: 6px;
    padding: 0 1px;
    background: #ece9d8;
}

.cursor, .data {
    display: flex;
    padding: 6px 0 7px 14px;
    font-size: 12px;
    font-weight: bold;
}

.cursor {
    flex: 1;
    gap: 11px;
}

.cursor div {
    display: flex;
}

.cursor button, .data button {
    width: 23px;
    height: 20px;
}

.cursor .on {
    width: 27px;
}

.data {
    gap: 5px;
    width: 70px;
    padding-left: 9px;
}

.data svg {
    width: 21px;
    height: 19px;
}

.pair-row {
    display: grid;
    grid-template-columns: 1fr 1fr;
    gap: 9px;
    margin-bottom: 1px;
}

.vertical {
    padding: 0 5px 8px;
}

.vertical select {
    width: 100%;
}

.range-grid {
    display: flex;
    gap: 1px;
    margin-top: 8px;
}

.range-names {
    width: 28px;
}

.range-names label {
    display: block;
}

.range-names button {
    width: 25px;
    height: 17px;
    margin: 4px 0;
}

.range-values {
    flex: 1;
    display: flex;
    flex-direction: column;
    gap: 9px;
}

.spin {
    display: flex;
    align-items: center;
    height: 19px;
}

.spin input {
    flex: 1;
    width: 0;
}

.spin button {
    width: 15px;
    height: 10px;
}

.spin svg {
    width: 7px;
    height: 4px;
}

.setup {
    display: flex;
    flex-direction: column;
    justify-content: flex-end;
    gap: 2px;
    padding: 0 8px 5px 10px;
}

.setup button {
    height: 18px;
}

.measurement {
    display: grid;
    grid-template-columns: 94px 1fr;
    align-items: start;
    gap: 8px;
    padding: 4px 7px 6px;
}

.measure-left {
    display: flex;
    flex-direction: column;
}

.measure-left > label {
    margin: 4px 0 5px 3px;
}

.measure-left > .pair {
    margin-top: 8px;
}

.pair {
    display: flex;
}

.pair button {
    flex: 1;
    height: 17px;
}

.strong button {
    font-size: 12px;
    font-weight: bold;
    height: 18px;
}

.amplitude {
    padding: 4px 5px 5px;
}

.amplitude label {
    display: block;
    margin-left: 2px;
}

.amplitude .row {
    gap: 2px;
    margin: 6px 0 7px;
}

.amplitude .spin, .frequency .row .spin {
    flex: 1;
}

.unit {
    width: 25px;
}

.frequency {
    padding: 7px 5px 9px;
}

.frequency > label {
    display: block;
    margin-bottom: 4px;
    text-align: right;
}

.frequency > label.res {
    margin: 4px 0 5px;
    text-align: center;
}

.stop-row {
    display: flex;
    align-items: center;
    justify-content: space-between;
    margin: 4px 0 1px;
}

.stop-row label span {
    margin-left: 2px;
}

.stop-row button {
    width: 19px;
    height: 17px;
}

.stop-row svg {
    width: 16px;
    height: 14px;
}

.frequency .row {
    gap: 3px;
}

.log {
    width: 24px;
}

.channel {
    display: flex;
    align-items: flex-start;
    gap: 8px;
    padding: 0 8px 5px;
}

.channel > select {
    width: 73px;
    margin-top: 9px;
}

.channel > .on {
    width: 28px;
    height: 19px;
    margin-top: 10px;
    font-size: 12px;
    font-weight: bold;
}

.coupling {
    flex: 1;
    margin-top: -6px;
    padding: 6px 7px 4px 9px;
}

.ball {
    position: absolute;
    top: 675px;
    right: -31px;
    background: none;
    border: 0;
    box-shadow: none;
}
```
